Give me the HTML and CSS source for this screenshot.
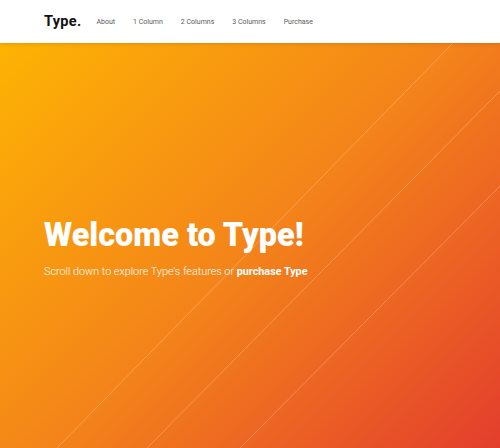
FILE: index.html
```html
<!DOCTYPE html>
<html>
<head>
<meta charset="utf-8">
<link rel="stylesheet" href="styles.css">
</head>
<body>
<header class="topbar">
  <a class="brand" href="#">Type.</a>
  <nav class="nav">
    <a href="#">About</a>
    <a href="#">1 Column</a>
    <a href="#">2 Columns</a>
    <a href="#">3 Columns</a>
    <a href="#">Purchase</a>
  </nav>
</header>
<section class="hero">
  <svg class="hero-lines" viewBox="0 0 500 405" preserveAspectRatio="none">
    <line x1="453" y1="0" x2="57" y2="405"/>
    <line x1="500" y1="48" x2="147" y2="405"/>
    <line x1="500" y1="143" x2="240" y2="405"/>
  </svg>
  <div class="hero-content">
    <h1 class="hero-title">Welcome to Type!</h1>
    <p class="hero-sub">Scroll down to explore Type's features or <strong>purchase Type</strong></p>
  </div>
</section>
</body>
</html>
```
FILE: styles.css
```css
html, body {
  margin: 0;
  padding: 0;
  height: 100%;
  overflow: hidden;
}
body {
  font-family: Roboto, "Liberation Sans", sans-serif;
  display: flex;
  flex-direction: column;
}
.topbar {
  height: 43px;
  flex: none;
  display: flex;
  align-items: center;
  padding-left: 44px;
  background: #fff;
  box-shadow: 0 1px 4px rgba(0,0,0,0.12);
  position: relative;
  z-index: 2;
}
.brand {
  font-size: 14.5px;
  font-weight: 700;
  color: #111;
  text-decoration: none;
  margin-right: 15px;
  letter-spacing: 0.3px;
}
.nav {
  display: flex;
  gap: 18px;
}
.nav a {
  font-size: 7px;
  color: #5a5a5a;
  text-decoration: none;
}
.hero {
  flex: 1;
  position: relative;
  display: flex;
  align-items: center;
  padding-left: 44px;
  background: linear-gradient(135deg, #fdb303 0%, #f4841a 50%, #e33e2d 100%);
  overflow: hidden;
}
.hero-lines {
  position: absolute;
  inset: 0;
  width: 100%;
  height: 100%;
}
.hero-lines line {
  stroke: rgba(255,255,255,0.25);
  stroke-width: 1;
}
.hero-content {
  position: relative;
  color: #fff;
  margin-top: 2px;
}
.hero-title {
  margin: 0;
  font-size: 32.4px;
  font-weight: 900;
  line-height: 40px;
}
.hero-sub {
  margin: 10px 0 0;
  font-size: 10.8px;
  font-weight: 300;
}
.hero-sub strong {
  font-weight: 700;
}
```
